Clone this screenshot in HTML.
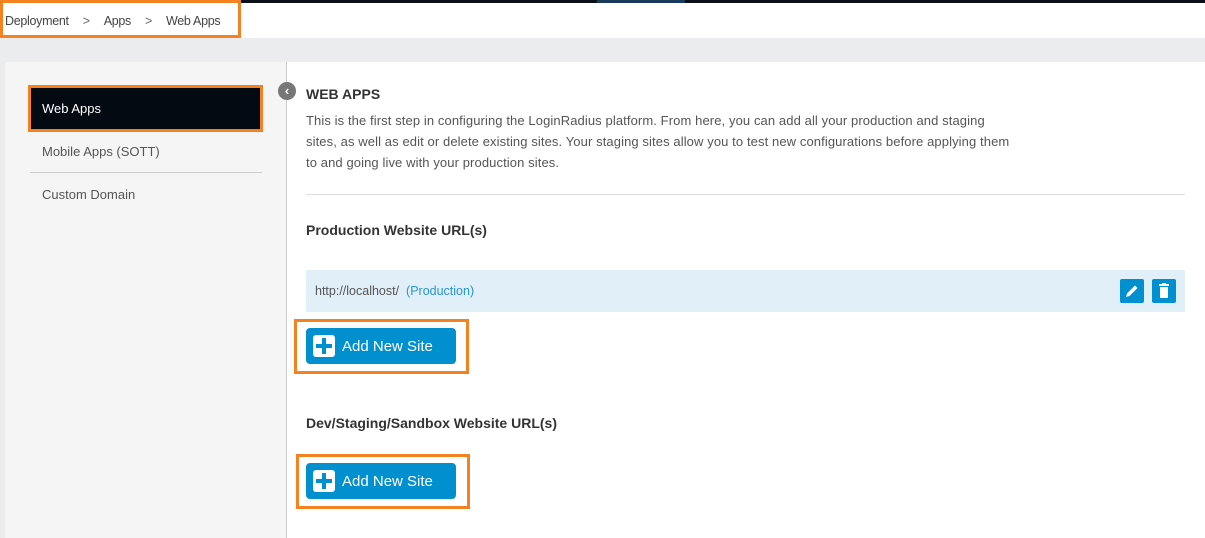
<!DOCTYPE html>
<html><head><style>
*{margin:0;padding:0;box-sizing:border-box}
body{width:1205px;height:538px;overflow:hidden;background:#ebecee;font-family:"Liberation Sans",sans-serif;position:relative}
.a{position:absolute}
.t{font-size:12.5px;color:#555}
.btn{position:absolute;left:306px;width:150px;height:36px;background:#0090d0;border-radius:4px;color:#fff;font-size:15px}
.btn .p{position:absolute;left:7px;top:7px;width:22px;height:22px;background:#fff;border-radius:3px}
.btn .p:before{content:"";position:absolute;left:9px;top:3px;width:4px;height:16px;background:#0090d0}
.btn .p:after{content:"";position:absolute;left:3px;top:9px;width:16px;height:4px;background:#0090d0}
.btn span{position:absolute;left:36px;top:10px}
.ob{position:absolute;border:3px solid #f58220}
</style></head><body>
<div class="a" style="left:0;top:0;width:1205px;height:38px;background:#fff"></div>
<div class="a" style="left:180px;top:0;width:1025px;height:3px;background:#0b0f18"></div>
<div class="a" style="left:597px;top:0;width:88px;height:3px;background:#1a3a5c"></div>
<div class="ob" style="left:0;top:0;width:241px;height:38px"></div>
<div class="a t" style="left:5px;top:14px;color:#444;letter-spacing:-0.3px">Deployment<span style="margin:0 14px 0 14px;color:#666">&gt;</span>Apps<span style="margin:0 14px;color:#666">&gt;</span>Web Apps</div>
<div class="a" style="left:5px;top:62px;width:282px;height:476px;background:#f5f5f5;border-right:1px solid #ccc"></div>
<div class="a" style="left:287px;top:62px;width:918px;height:476px;background:#fff"></div>
<div class="ob" style="left:28px;top:85px;width:235px;height:47px"></div>
<div class="a" style="left:31px;top:88px;width:229px;height:41px;background:#040a12"></div>
<div class="a" style="left:42px;top:101px;color:#fff;font-size:13px">Web Apps</div>
<div class="a t" style="left:42px;top:144px;font-size:13px">Mobile Apps (SOTT)</div>
<div class="a" style="left:30px;top:172px;width:232px;height:1px;background:#ccc"></div>
<div class="a t" style="left:42px;top:187px;font-size:13px">Custom Domain</div>
<div class="a" style="left:278px;top:82px;width:18px;height:18px;border-radius:50%;background:#777;color:#fff;font-size:13px;text-align:center;line-height:17px;font-weight:bold">‹</div>
<div class="a" style="left:306px;top:86px;font-size:14px;font-weight:bold;color:#333">WEB APPS</div>
<div class="a t" style="left:306px;top:110px;line-height:21px;font-size:13px;letter-spacing:0.1px;white-space:nowrap">This is the first step in configuring the LoginRadius platform. From here, you can add all your production and staging<br>sites, as well as edit or delete existing sites. Your staging sites allow you to test new configurations before applying them<br>to and going live with your production sites.</div>
<div class="a" style="left:306px;top:194px;width:879px;height:1px;background:#ddd"></div>
<div class="a" style="left:306px;top:222px;font-size:14px;font-weight:bold;color:#333">Production Website URL(s)</div>
<div class="a" style="left:306px;top:270px;width:879px;height:42px;background:#e1eff8"></div>
<div class="a t" style="left:315px;top:284px">http://localhost/&nbsp;&nbsp;<span style="color:#2a95d0">(Production)</span></div>
<div class="a" style="left:1120px;top:279px;width:24px;height:24px;background:#0090d0;border-radius:2px">
<svg width="24" height="24"><path d="M6 18l1-3.5 8-8 2.5 2.5-8 8z" fill="#fff"/></svg></div>
<div class="a" style="left:1152px;top:279px;width:24px;height:24px;background:#0090d0;border-radius:2px">
<svg width="24" height="24"><rect x="7" y="5" width="10" height="2" fill="#fff"/><rect x="10" y="4" width="4" height="2" fill="#fff"/><rect x="8" y="8" width="8" height="11" fill="#fff"/></svg></div>
<div class="ob" style="left:294px;top:319px;width:175px;height:55px"></div>
<div class="btn" style="top:328px"><div class="p"></div><span>Add New Site</span></div>
<div class="a" style="left:306px;top:415px;font-size:14px;font-weight:bold;color:#333">Dev/Staging/Sandbox Website URL(s)</div>
<div class="ob" style="left:296px;top:454px;width:174px;height:55px"></div>
<div class="btn" style="top:463px"><div class="p"></div><span>Add New Site</span></div>
</body></html>
